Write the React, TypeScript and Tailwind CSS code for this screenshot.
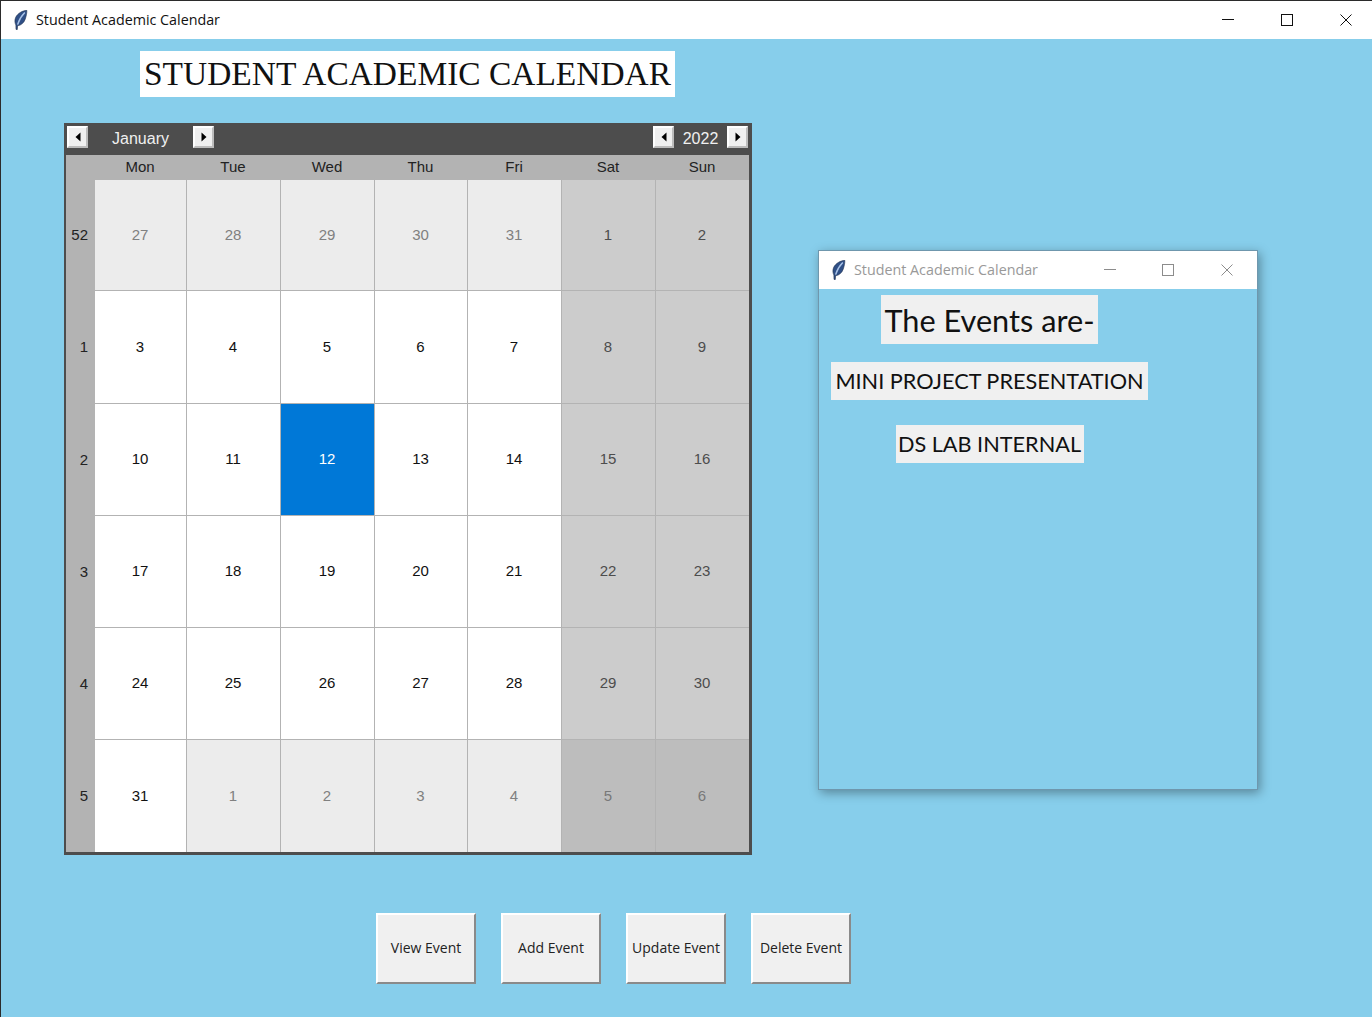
const COL_HEADERS = ['Mon', 'Tue', 'Wed', 'Thu', 'Fri', 'Sat', 'Sun']

const WEEKS: { week: number; days: number[] }[] = [
  { week: 52, days: [27, 28, 29, 30, 31, 1, 2] },
  { week: 1, days: [3, 4, 5, 6, 7, 8, 9] },
  { week: 2, days: [10, 11, 12, 13, 14, 15, 16] },
  { week: 3, days: [17, 18, 19, 20, 21, 22, 23] },
  { week: 4, days: [24, 25, 26, 27, 28, 29, 30] },
  { week: 5, days: [31, 1, 2, 3, 4, 5, 6] },
]

function Feather({ className }: { className: string }) {
  return (
    <svg viewBox="0 0 14 20" className={className} aria-hidden>
      <path d="M12.8 0.3C8.6 0.6 3.4 3.4 1.6 7.6C0.5 10.4 0.8 13 1.9 15L2 19.4L3.3 19.6L3.6 15.8C7.4 15.2 10 12.6 11.2 9.2C12.2 6.2 13 3 12.8 0.3Z" fill="#2f4f86" stroke="#22324f" strokeWidth="0.6" />
      <path d="M10.8 2.6C8 5.4 5.2 9.6 3.6 14.6" fill="none" stroke="#a9c3e8" strokeWidth="1.4" />
    </svg>
  )
}

function Arrow({ right }: { right?: boolean }) {
  return (
    <button
      type="button"
      className="flex h-[22px] w-[21px] items-center justify-center border-2 border-t-white border-r-[#bdbdbd] border-b-[#bdbdbd] border-l-white bg-[#f0f0f0]"
    >
      <svg width="6" height="10" viewBox="0 0 6 10" aria-hidden>
        <path d={right ? 'M0.5 0.5L5.5 5L0.5 9.5Z' : 'M5.5 0.5L0.5 5L5.5 9.5Z'} fill="#000" />
      </svg>
    </button>
  )
}

function dayCellClass(rowIdx: number, colIdx: number, day: number) {
  const weekend = colIdx >= 5
  const isOther = (rowIdx === 0 && colIdx < 5) || (rowIdx === 5 && colIdx > 0)
  if (rowIdx === 2 && day === 12) return 'bg-[#0078d7] text-white'
  if (rowIdx === 5 && weekend) return 'bg-[#bdbdbd] text-[#787878]'
  if (isOther) return 'bg-[#ececec] text-[#808080]'
  if (weekend) return 'bg-[#cccccc] text-[#4d4d4d]'
  return 'bg-white text-[#111]'
}

function Calendar() {
  return (
    <div className="ml-[63px] mt-[26px] flex h-[732px] w-[688px] flex-col border-t-0 border-r-[3px] border-b-[3px] border-l-2 border-[#4d4d4d] font-['Liberation_Sans',sans-serif]">
      <div className="flex h-[32px] shrink-0 items-start bg-[#4d4d4d] pt-[3px] pl-px pr-px text-[16px] text-[#f0f0f0]">
        <Arrow />
        <div className="w-[105px] pt-px text-center">January</div>
        <Arrow right />
        <div className="flex-1" />
        <Arrow />
        <div className="w-[53px] pt-px text-center">2022</div>
        <Arrow right />
      </div>
      <div className="grid h-[25px] shrink-0 grid-cols-[28px_92px_94px_94px_93px_94px_94px_94px] items-center bg-[#b3b3b3] text-[15px] text-[#222]">
        <div />
        {COL_HEADERS.map((d) => (
          <div key={d} className="text-center">{d}</div>
        ))}
      </div>
      <div className="grid flex-1 grid-rows-[111px_113px_112px_112px_112px_112px] bg-[#b3b3b3]">
        {WEEKS.map((row, rowIdx) => (
          <div key={row.week + '-' + rowIdx} className="grid grid-cols-[28px_91px_93px_93px_92px_93px_93px_93px] gap-x-px text-[15px]">
            <div className="flex items-center justify-end pr-[6px] text-[#222]">{row.week}</div>
            {row.days.map((day, colIdx) => (
              <div
                key={colIdx}
                className={'flex items-center justify-center pr-px ' + (rowIdx < 5 ? 'mb-px ' : '') + dayCellClass(rowIdx, colIdx, day)}
              >
                {day}
              </div>
            ))}
          </div>
        ))}
      </div>
    </div>
  )
}

function EventsWindow() {
  return (
    <div className="absolute top-[249px] left-[817px] flex h-[540px] w-[440px] flex-col border border-[#6f97ad] bg-[#87ceeb] shadow-[2px_3px_10px_rgba(0,0,0,0.35)]">
      <div className="flex h-[38px] shrink-0 items-center bg-white pb-px font-['Open_Sans',sans-serif] text-[14.3px] text-[#999]">
        <Feather className="ml-[13px] h-[20px] w-[14px]" />
        <span className="ml-[8px] whitespace-nowrap">Student Academic Calendar</span>
        <svg className="absolute top-[18px] left-[285px]" width="12" height="2" aria-hidden>
          <path d="M0 0.5H12" stroke="#8c8c8c" />
        </svg>
        <svg className="absolute top-[13px] left-[343px]" width="12" height="12" aria-hidden>
          <rect x="0.5" y="0.5" width="11" height="11" fill="none" stroke="#8c8c8c" />
        </svg>
        <svg className="absolute top-[13px] left-[402px]" width="12" height="12" aria-hidden>
          <path d="M0.5 0.5L11.5 11.5M11.5 0.5L0.5 11.5" stroke="#8c8c8c" />
        </svg>
      </div>
      <div className="flex w-[341px] flex-col items-center pt-[6px] font-['Lato',sans-serif] whitespace-nowrap text-[#111]">
        <div className="flex h-[49px] w-[217px] items-center justify-center bg-[#f0f0f0] pt-[3px] text-[30.7px]">The Events are-</div>
        <div className="mt-[18px] flex h-[38px] w-[317px] items-center justify-center bg-[#f0f0f0] pt-px text-[21.7px]">MINI PROJECT PRESENTATION</div>
        <div className="mt-[25px] flex h-[38px] w-[188px] items-center justify-center bg-[#f0f0f0] pt-px text-[21.7px]">DS LAB INTERNAL</div>
      </div>
    </div>
  )
}

export default function App() {
  return (
    <div className="relative h-[1017px] w-[1372px] overflow-hidden border-t border-l border-[#2b2b2b] bg-[#87ceeb]">
      <div className="absolute top-[-1px] left-[636px] h-px w-[61px] bg-[#2f8fd6]" />
      <header className="flex h-[38px] items-center bg-white pb-px font-['Open_Sans',sans-serif] text-[14.3px] text-[#111]">
        <Feather className="ml-[13px] h-[20px] w-[14px]" />
        <span className="ml-[8px] whitespace-nowrap">Student Academic Calendar</span>
        <div className="ml-auto flex items-center text-black">
          <svg width="12" height="2" className="mr-[47px]" aria-hidden><path d="M0 0.5H12" stroke="#111" /></svg>
          <svg width="12" height="12" className="mr-[47px]" aria-hidden><rect x="0.5" y="0.5" width="11" height="11" fill="none" stroke="#111" /></svg>
          <svg width="12" height="12" className="mr-[20px]" aria-hidden><path d="M0.5 0.5L11.5 11.5M11.5 0.5L0.5 11.5" stroke="#111" /></svg>
        </div>
      </header>
      <main>
        <h1 className="ml-[139px] mt-[12px] flex h-[46px] w-[535px] items-center justify-center whitespace-nowrap bg-white font-['Liberation_Serif',serif] text-[33.45px] font-normal text-[#111]">
          STUDENT ACADEMIC CALENDAR
        </h1>
        <Calendar />
        <div className="ml-[375px] mt-[58px] flex gap-[25px] font-['Open_Sans',sans-serif] text-[14px] text-[#222]">
          {['View Event', 'Add Event', 'Update Event', 'Delete Event'].map((label) => (
            <button
              key={label}
              type="button"
              className="h-[71px] w-[100px] whitespace-nowrap border-2 border-t-white border-r-[#8a8a8a] border-b-[#8a8a8a] border-l-white bg-[#f0f0f0] pb-[2px]"
            >
              {label}
            </button>
          ))}
        </div>
      </main>
      <EventsWindow />
    </div>
  )
}
